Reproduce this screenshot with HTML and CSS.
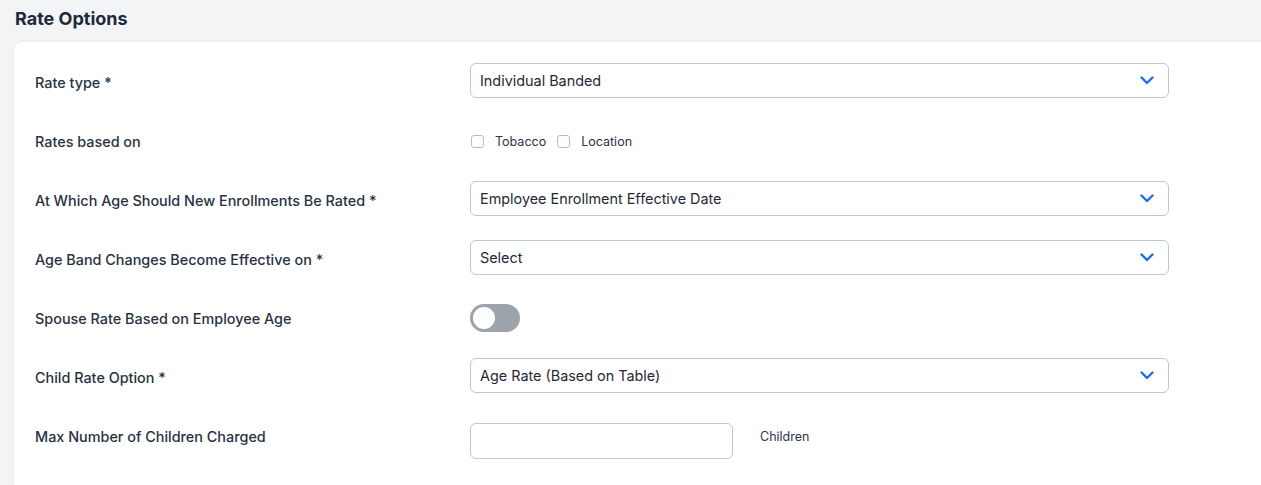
FILE: index.html
```html
<!DOCTYPE html>
<html lang="en">
<head>
    <meta charset="UTF-8">
    <title>Rate Options</title>
    <link rel="stylesheet" href="styles.css">
</head>
<body>
    <h2 class="section-title">Rate Options</h2>

    <div class="card">
        <div class="row">
            <label class="row-label">Rate type *</label>
            <div class="select">
                <span>Individual Banded</span>
                <svg class="chevron" viewBox="0 0 14 9" width="14" height="9"><path d="M1.5 1.5 L7 7 L12.5 1.5" fill="none" stroke="#1a6ee8" stroke-width="2.4" stroke-linecap="round" stroke-linejoin="round"/></svg>
            </div>
        </div>

        <div class="row">
            <label class="row-label">Rates based on</label>
            <div class="checks">
                <label class="check"><span class="box"></span>Tobacco</label>
                <label class="check"><span class="box"></span>Location</label>
            </div>
        </div>

        <div class="row">
            <label class="row-label">At Which Age Should New Enrollments Be Rated *</label>
            <div class="select">
                <span>Employee Enrollment Effective Date</span>
                <svg class="chevron" viewBox="0 0 14 9" width="14" height="9"><path d="M1.5 1.5 L7 7 L12.5 1.5" fill="none" stroke="#1a6ee8" stroke-width="2.4" stroke-linecap="round" stroke-linejoin="round"/></svg>
            </div>
        </div>

        <div class="row">
            <label class="row-label">Age Band Changes Become Effective on *</label>
            <div class="select">
                <span>Select</span>
                <svg class="chevron" viewBox="0 0 14 9" width="14" height="9"><path d="M1.5 1.5 L7 7 L12.5 1.5" fill="none" stroke="#1a6ee8" stroke-width="2.4" stroke-linecap="round" stroke-linejoin="round"/></svg>
            </div>
        </div>

        <div class="row">
            <label class="row-label">Spouse Rate Based on Employee Age</label>
            <div class="toggle"><span class="knob"></span></div>
        </div>

        <div class="row">
            <label class="row-label">Child Rate Option *</label>
            <div class="select">
                <span>Age Rate (Based on Table)</span>
                <svg class="chevron" viewBox="0 0 14 9" width="14" height="9"><path d="M1.5 1.5 L7 7 L12.5 1.5" fill="none" stroke="#1a6ee8" stroke-width="2.4" stroke-linecap="round" stroke-linejoin="round"/></svg>
            </div>
        </div>

        <div class="row">
            <label class="row-label">Max Number of Children Charged</label>
            <div class="with-unit">
                <input class="text-input" type="text">
                <span class="unit">Children</span>
            </div>
        </div>
    </div>
</body>
</html>
```

FILE: styles.css
```css
body {
    margin: 0;
    background: #f3f4f6;
    font-family: Inter, "Noto Sans", sans-serif;
    color: #2a3547;
    overflow: hidden;
}

.section-title {
    margin: 0;
    padding: 8px 0 0 15px;
    height: 42px;
    box-sizing: border-box;
    font-size: 18px;
    font-weight: 700;
    color: #1e293b;
}

.card {
    margin-left: 14px;
    width: 1300px;
    background: #fff;
    border-radius: 8px;
    box-shadow: 0 0 3px rgba(0,0,0,0.06);
    padding: 20px 0 30px 21px;
    min-height: 420px;
    box-sizing: border-box;
}

.row {
    display: grid;
    grid-template-columns: 435px 699px;
    grid-template-rows: 36px;
    align-items: center;
    margin-bottom: 23px;
}

.row-label {
    font-size: 14.4px;
    font-weight: 500;
    color: #273244;
    padding-top: 5px;
}

.select {
    height: 35px;
    box-sizing: border-box;
    border: 1px solid #b6c9da;
    border-radius: 6px;
    display: flex;
    align-items: center;
    justify-content: space-between;
    padding: 0 14px 0 9px;
    font-size: 14.4px;
    color: #1f2937;
}

.chevron {
    display: block;
}

.checks {
    display: flex;
    align-items: center;
    gap: 10px;
    padding-top: 5px;
}

.check {
    display: flex;
    align-items: center;
    font-size: 12.5px;
    color: #2a3547;
}

.box {
    width: 13px;
    height: 13px;
    border: 1px solid #a9bfd2;
    border-radius: 3px;
    box-sizing: border-box;
    margin: 0 11px 0 1px;
}

.toggle {
    width: 50px;
    height: 28px;
    margin-top: 4px;
    border-radius: 14px;
    background: #9ca3ab;
    position: relative;
}

.knob {
    position: absolute;
    left: 3px;
    top: 3px;
    width: 22px;
    height: 22px;
    border-radius: 50%;
    background: #fff;
}

.with-unit {
    display: flex;
    align-items: center;
    padding-top: 13px;
}

.text-input {
    width: 263px;
    height: 36px;
    box-sizing: border-box;
    border: 1px solid #b6c9da;
    border-radius: 6px;
    outline: none;
}

.unit {
    margin-left: 27px;
    margin-top: -8px;
    font-size: 12.5px;
    color: #2a3547;
}
```
